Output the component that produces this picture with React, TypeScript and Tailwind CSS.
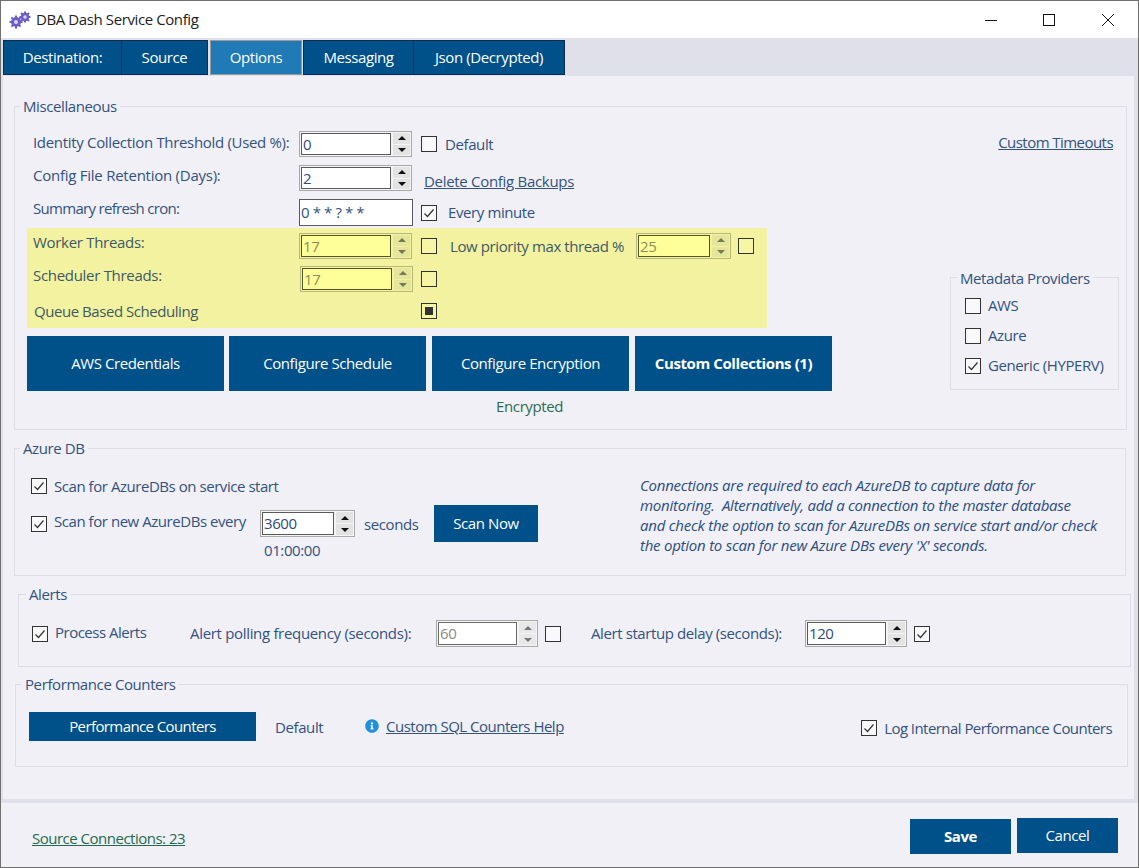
import React from "react";
import { FaInfoCircle } from "react-icons/fa";

const tones = {
  normal: { outer: "border-[#a8a8a8] bg-[#f4f4f4]", input: "border-[#5a5a5a] bg-white text-[#2f4a7c]", btn: "bg-[#e3e3e3]", arrow: "#111111" },
  disabled: { outer: "border-[#a8a8a8] bg-[#f4f4f4]", input: "border-[#6a6a6a] bg-white text-[#8a8a8a]", btn: "bg-[#e8e8e8]", arrow: "#777777" },
  yellow: { outer: "border-[#b8b878] bg-[#f2f2a0]", input: "border-[#55552a] bg-[#ffff99] text-[#8c8c5c]", btn: "bg-[#e6e69a]", arrow: "#77775a" },
};

const Spinner = ({ value, w = "w-[113px]", h = "h-[26px]", tone = "normal" }: { value: string; w?: string; h?: string; tone?: "normal" | "disabled" | "yellow" }) => {
  const t = tones[tone];
  return (
    <div className={`flex shrink-0 gap-[2px] border p-px ${w} ${h} ${t.outer}`}>
      <div className={`flex min-w-0 flex-1 items-center border pl-[1px] ${t.input}`}>{value}</div>
      <div className="flex w-[17px] flex-col gap-px">
        <div className={`flex flex-1 items-center justify-center ${t.btn}`}>
          <svg width="8" height="4" viewBox="0 0 8 4"><path d="M4 0 L8 4 L0 4 Z" fill={t.arrow} /></svg>
        </div>
        <div className={`flex flex-1 items-center justify-center ${t.btn}`}>
          <svg width="8" height="4" viewBox="0 0 8 4"><path d="M0 0 L8 0 L4 4 Z" fill={t.arrow} /></svg>
        </div>
      </div>
    </div>
  );
};

const Check = ({ checked, yellow, mixed }: { checked?: boolean; yellow?: boolean; mixed?: boolean }) => (
  <div className={`flex size-4 shrink-0 items-center justify-center border border-[#333333] ${yellow ? "bg-[#f6f6a4]" : "bg-[#f9f9fb]"}`}>
    {checked && (
      <svg width="14" height="14" viewBox="0 0 14 14"><path d="M2.5 7.5 L5.5 10.5 L11.5 3.5" fill="none" stroke="#333333" strokeWidth="1.2" /></svg>
    )}
    {mixed && <div className="size-2 bg-[#333333]" />}
  </div>
);

const Group = ({ title, className, legendClass = "ml-[5px]", children }: { title: string; className: string; legendClass?: string; children: React.ReactNode }) => (
  <fieldset className={`border border-[#dcdde5] ${className}`}>
    <legend className={`px-[3px] leading-5 text-[#33527f] ${legendClass}`}>{title}</legend>
    {children}
  </fieldset>
);

const Btn = ({ children, className }: { children: React.ReactNode; className: string }) => (
  <button className={`flex shrink-0 items-center justify-center bg-[#00508a] text-white ${className}`}>{children}</button>
);

const Tab = ({ label, className }: { label: string; className: string }) => (
  <div className={`flex h-full items-center justify-center border border-[#0c2c50] text-white ${className}`}>{label}</div>
);

const Gears = () => (
  <svg width="22" height="18" viewBox="0 0 22 18" className="shrink-0">
    <g fill="#6b5fc7">
      <circle cx="7" cy="11" r="5" />
      <circle cx="16" cy="6" r="4.2" />
      <g stroke="#6b5fc7" strokeWidth="2">
        <path d="M7 4.5V17.5M.5 11H13.5M2.4 6.4L11.6 15.6M11.6 6.4L2.4 15.6" />
        <path d="M16 .5V11.5M10.5 6H21.500M12 2L20 10M20 2L12 10" />
      </g>
    </g>
    <circle cx="7" cy="11" r="2" fill="#d8d4f4" />
    <circle cx="16" cy="6" r="1.7" fill="#d8d4f4" />
  </svg>
);

export default function App() {
  return (
    <div className="flex h-[868px] w-[1139px] flex-col overflow-hidden border border-[#707070] bg-[#f0f0f6] font-['Open_Sans',sans-serif] text-[15px] tracking-[-0.4px] text-[#33527f]">
      {/* Title bar */}
      <div className="flex h-[37px] shrink-0 items-center bg-white">
        <div className="ml-2"><Gears /></div>
        <span className="ml-[5px] text-[#222222]">DBA Dash Service Config</span>
        <div className="ml-auto mr-[24px] flex items-center">
          <svg width="12" height="12" viewBox="0 0 12 12" className="mr-[46px]"><path d="M0 6.5H12" stroke="#111" /></svg>
          <svg width="12" height="12" viewBox="0 0 12 12" className="mr-[47px]"><rect x=".5" y=".5" width="11" height="11" fill="none" stroke="#111" /></svg>
          <svg width="12" height="12" viewBox="0 0 12 12"><path d="M0 0L12 12M12 0L0 12" stroke="#111" /></svg>
        </div>
      </div>

      {/* Tabs and page */}
      <div className="flex h-[765px] shrink-0 flex-col bg-[#dfe0e9]">
        <div className="flex h-[38px] shrink-0 pl-[2px] pt-[2px] pb-px">
          <Tab label="Destination:" className="w-[119px] bg-[#00508a]" />
          <Tab label="Source" className="w-[86px] border-l-0 bg-[#00508a]" />
          <Tab label="Options" className="ml-[2px] w-[92px] border-[#9a9a9a] bg-[#1f7ab5]" />
          <Tab label="Messaging" className="ml-px w-[111px] border-l-[#0c2c50] bg-[#00508a]" />
          <Tab label="Json (Decrypted)" className="w-[151px] border-l-0 bg-[#00508a]" />
        </div>

        <div className="ml-[2px] mr-[4px] flex h-[723px] flex-col bg-[#f0f0f6] pl-[11px] pt-5">
          {/* Miscellaneous */}
          <Group title="Miscellaneous" className="flex h-[334px] w-[1113px] shrink-0 justify-between">
            <div className="w-[806px] pl-3 pt-[15px]">
              <div className="flex h-[26px] items-center">
                <span className="mb-1 w-[272px] pl-[6px] tracking-[-0.32px]">Identity Collection Threshold (Used %):</span>
                <Spinner value="0" />
                <div className="ml-[9px] mr-2"><Check /></div>
                <span className="mt-px">Default</span>
              </div>
              <div className="mt-2 flex h-[26px] items-center">
                <span className="mb-[5px] w-[272px] pl-[6px] tracking-[-0.25px]">Config File Retention (Days):</span>
                <Spinner value="2" />
                <span className="ml-3 mt-[6px] tracking-[-0.3px] underline">Delete Config Backups</span>
              </div>
              <div className="mt-2 flex h-[27px] items-center">
                <span className="mb-2 w-[272px] pl-[6px] tracking-[-0.7px]">Summary refresh cron:</span>
                <div className="flex h-[27px] w-[114px] items-center border border-[#5a5a5a] bg-white pl-px">0 * * ? * *</div>
                <div className="ml-2 mr-[11px]"><Check checked /></div>
                <span>Every minute</span>
              </div>

              <div className="mt-[2px] h-[100px] w-[740px] bg-[#f2f2a0] pt-[5px] text-[#3f5a66]">
                <div className="flex h-[26px] items-center">
                  <span className="mb-[8px] w-[272px] pl-[6px] tracking-[-0.3px]">Worker Threads:</span>
                  <Spinner value="17" tone="yellow" />
                  <div className="ml-[9px] mr-[13px]"><Check yellow /></div>
                  <span className="w-[186px]">Low priority max thread %</span>
                  <Spinner value="25" tone="yellow" w="w-[95px]" />
                  <div className="ml-[7px]"><Check yellow /></div>
                </div>
                <div className="mt-[7px] flex h-[26px] items-center">
                  <span className="mb-[8px] w-[273px] pl-[6px] tracking-[-0.3px]">Scheduler Threads:</span>
                  <Spinner value="17" tone="yellow" />
                  <div className="ml-[8px]"><Check yellow /></div>
                </div>
                <div className="mt-[11px] flex h-[16px] items-center">
                  <span className="mt-px w-[394px] pl-[7px] tracking-[-0.45px]">Queue Based Scheduling</span>
                  <Check yellow mixed />
                </div>
              </div>

              <div className="mt-2 flex">
                <Btn className="h-[55px] w-[197px]">AWS Credentials</Btn>
                <Btn className="ml-[5px] h-[55px] w-[197px]">Configure Schedule</Btn>
                <Btn className="ml-[6px] h-[55px] w-[197px]">Configure Encryption</Btn>
                <Btn className="ml-[6px] h-[55px] w-[197px] font-bold">Custom Collections (1)</Btn>
              </div>
              <div className="mt-[5px] w-[536px] text-right leading-5 text-[#2f6b52]">Encrypted</div>
            </div>

            <div className="flex flex-col items-end pr-[7px] pt-[15px]">
              <span className="mr-[6px] tracking-[-0.55px] underline">Custom Timeouts</span>
              <Group title="Metadata Providers" className="mt-[114px] h-[122px] w-[169px]" legendClass="ml-[6px]">
                <div className="flex flex-col gap-[14px] pl-[14px] pt-[10px]">
                  <div className="flex h-4 items-center gap-[7px]"><Check /><span>AWS</span></div>
                  <div className="flex h-4 items-center gap-[7px]"><Check /><span>Azure</span></div>
                  <div className="flex h-4 items-center gap-[7px]"><Check checked /><span>Generic (HYPERV)</span></div>
                </div>
              </Group>
            </div>
          </Group>

          {/* Azure DB */}
          <Group title="Azure DB" className="mt-2 flex h-[138px] w-[1112px] shrink-0">
            <div className="w-[625px] pl-4 pt-5">
              <div className="flex h-4 items-center gap-[7px]"><Check checked /><span className="tracking-[-0.45px]">Scan for AzureDBs on service start</span></div>
              <div className="mt-[11px] flex h-[37px] items-center">
                <Check checked />
                <span className="ml-[7px] mb-1 w-[206px] tracking-[-0.45px]">Scan for new AzureDBs every</span>
                <Spinner value="3600" w="w-[95px]" h="h-[27px]" />
                <span className="ml-[9px] mt-[2px] w-[70px]">seconds</span>
                <Btn className="h-[37px] w-[104px]">Scan Now</Btn>
              </div>
              <div className="ml-[233px] mt-[-2px] leading-5">01:00:00</div>
            </div>
            <p className="w-[470px] whitespace-pre pt-[17px] italic leading-5 tracking-[-0.24px] text-[#2b4d80]">
              Connections are required to each AzureDB to capture data for<br />
              monitoring.  Alternatively, add a connection to the master database<br />
              and check the option to scan for AzureDBs on service start and/or check<br />
              the option to scan for new Azure DBs every 'X' seconds.
            </p>
          </Group>

          {/* Alerts */}
          <Group title="Alerts" className="ml-1 mt-2 flex h-[83px] w-[1113px] shrink-0" legendClass="ml-[7px]">
            <div className="ml-[13px] mt-4 flex h-[27px] items-center">
              <Check checked />
              <span className="ml-[7px] mb-[2px] w-[135px] tracking-[-0.5px]">Process Alerts</span>
              <span className="w-[246px] tracking-[-0.32px]">Alert polling frequency (seconds):</span>
              <Spinner value="60" tone="disabled" w="w-[102px]" h="h-[27px]" />
              <div className="ml-[7px]"><Check /></div>
              <span className="ml-[30px] w-[214px]">Alert startup delay (seconds):</span>
              <Spinner value="120" w="w-[102px]" h="h-[27px]" />
              <div className="ml-[7px]"><Check checked /></div>
            </div>
          </Group>

          {/* Performance Counters */}
          <Group title="Performance Counters" className="ml-px mt-[7px] flex h-[93px] w-[1113px] shrink-0 justify-between" legendClass="ml-[6px]">
            <div className="ml-[13px] mt-[18px] flex h-[29px] items-center">
              <Btn className="h-[29px] w-[227px] tracking-[-0.6px]">Performance Counters</Btn>
              <span className="ml-[19px] mt-px w-[90px]">Default</span>
              <FaInfoCircle className="mb-[2px] size-[14px] text-[#1e90dc]" />
              <span className="ml-[7px] tracking-[-0.5px] underline">Custom SQL Counters Help</span>
            </div>
            <div className="mr-[15px] mt-[26px] flex h-4 items-center gap-[7px]"><Check checked /><span className="tracking-[-0.55px]">Log Internal Performance Counters</span></div>
          </Group>
        </div>
      </div>

      {/* Footer */}
      <div className="flex flex-1 items-start justify-between pl-[31px] pr-5">
        <span className="mt-6 tracking-[-0.5px] text-[#1f6b4e] underline">Source Connections: 23</span>
        <div className="mt-[15px] flex items-start gap-[6px]">
          <Btn className="mt-px h-[35px] w-[101px] font-bold">Save</Btn>
          <Btn className="h-[35px] w-[101px]">Cancel</Btn>
        </div>
      </div>
    </div>
  );
}
